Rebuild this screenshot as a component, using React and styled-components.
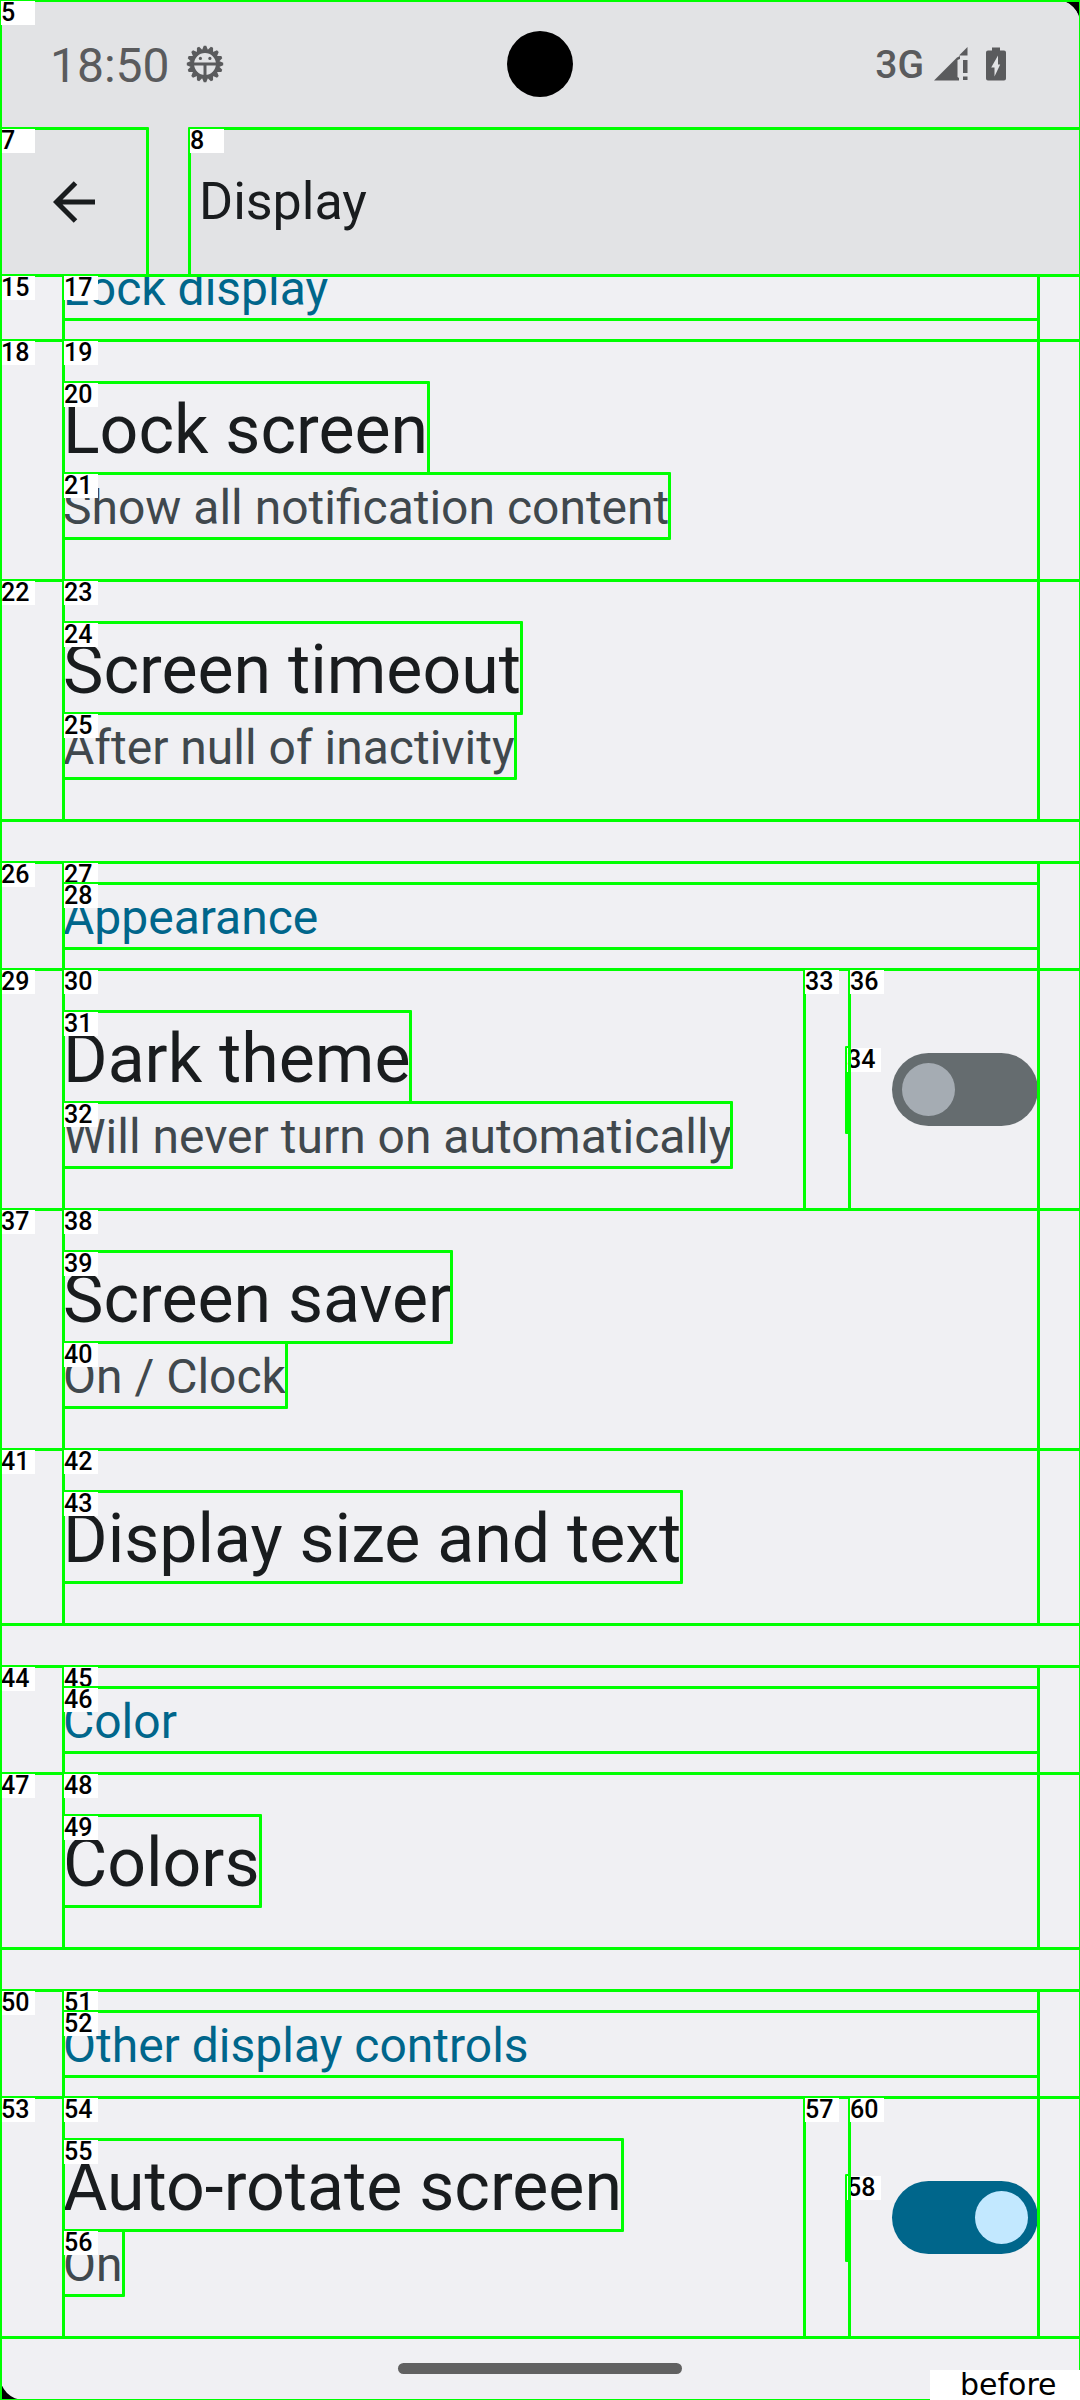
import React, { useState } from "react";
import styled, { createGlobalStyle } from "styled-components";

const GlobalStyle = createGlobalStyle`
  *, *::before, *::after { box-sizing: border-box; }
  body { margin: 0; background: #000; }
`;

const Screen = styled.div`
  position: relative;
  display: flex;
  flex-direction: column;
  min-height: 100vh;
  overflow: hidden;
  background: #000;
  color: #191c1e;
  font-family: Roboto, "Noto Sans", sans-serif;
`;

const Surface = styled.div`
  flex: 1;
  display: flex;
  flex-direction: column;
  border-radius: 24px;
  overflow: hidden;
  background: #f0f0f3;
`;

const Outline = styled.span`
  position: absolute;
  inset: -1px -2px -2px -1px;
  border: 3px solid #00ff00;
  border-radius: 1px;
  pointer-events: none;
`;

const Tag = styled.span`
  position: absolute;
  top: -1px;
  left: -1px;
  width: 34px;
  height: 24px;
  background: #fff;
  color: #000;
  font-size: 25px;
  font-weight: 500;
  line-height: 24px;
  text-align: left;
`;

function Mark({ id }) {
  return (
    <Outline aria-hidden="true">
      {id && <Tag>{id}</Tag>}
    </Outline>
  );
}

const StatusBar = styled.header`
  display: grid;
  grid-template-columns: 1fr auto 1fr;
  align-items: center;
  height: 128px;
  padding: 0 50px;
  background: #e2e3e5;
  color: #5a5b5d;
`;

const StatusStart = styled.div`
  display: flex;
  align-items: center;
  gap: 16px;
`;

const StatusEnd = styled.div`
  display: flex;
  align-items: center;
  justify-content: flex-end;
  gap: 18px;
  padding-right: 24px;
`;

const Cellular = styled.div`
  display: flex;
  align-items: center;
  gap: 10px;
`;

const Clock = styled.time`
  padding-top: 4px;
  font-size: 48px;
  line-height: 56px;
`;

const Network = styled.span`
  padding-top: 2px;
  font-size: 39px;
  font-weight: 500;
  line-height: 48px;
`;

const Camera = styled.div`
  width: 66px;
  height: 66px;
  border-radius: 50%;
  background: #000;
`;

const Toolbar = styled.div`
  display: flex;
  height: 147px;
  gap: 42px;
  background: #e2e3e5;
`;

const BackButton = styled.button`
  position: relative;
  display: grid;
  place-items: center;
  width: 147px;
  padding: 0;
  border: 0;
  background: none;
  color: #191c1e;
  font-family: inherit;
`;

const ToolbarTitle = styled.div`
  position: relative;
  flex: 1;
  display: flex;
  align-items: center;
  padding-left: 10px;
`;

const Heading = styled.h1`
  margin: 0;
  font-size: 52px;
  font-weight: 400;
  line-height: 64px;
`;

const List = styled.main`
  flex: 1;
  display: flex;
  flex-direction: column;
  gap: 42px;
`;

const Category = styled.section`
  display: flex;
  flex-direction: column;
`;

const CategoryHeader = styled.div`
  position: relative;
  padding: 0 42px 0 63px;
`;

const CategoryInner = styled.div`
  position: relative;
  padding: ${(p) => (p.$scrolled ? "0" : "21px")} 0 21px;
`;

const CategoryBox = styled.div`
  position: relative;
  display: flex;
  align-items: flex-end;
  height: ${(p) => (p.$scrolled ? "44px" : "65px")};
`;

const CategoryClip = styled.div`
  display: flex;
  align-items: flex-end;
  height: 100%;
  overflow: hidden;
`;

const CategoryTitle = styled.h2`
  margin: 0;
  padding-top: 4px;
  color: #00668b;
  font-size: 48px;
  font-weight: 400;
  line-height: 61px;
`;

const Row = styled.div`
  position: relative;
  display: flex;
  padding: 0 42px 0 63px;
`;

const RowText = styled.div`
  position: relative;
  flex: 1;
  display: flex;
  flex-direction: column;
  align-items: flex-start;
  padding: 42px 0;
`;

const Title = styled.div`
  position: relative;
  padding-top: 6px;
  font-size: 68px;
  line-height: 85px;
`;

const Summary = styled.div`
  position: relative;
  padding-top: 4px;
  color: #40484d;
  font-size: 48px;
  line-height: 61px;
`;

const DividerCell = styled.div`
  position: relative;
  display: flex;
  align-items: center;
  justify-content: flex-end;
  width: 45px;
`;

const Divider = styled.div`
  position: relative;
  width: 3px;
  height: 85px;
`;

const SwitchCell = styled.div`
  position: relative;
  display: flex;
  align-items: center;
  justify-content: flex-end;
  width: 189px;
`;

const Switch = styled.input`
  appearance: none;
  display: flex;
  align-items: center;
  width: 146px;
  height: 73px;
  margin: 0;
  padding: 10px;
  border-radius: 37px;
  background: #656c6f;

  &::before {
    content: "";
    width: 53px;
    height: 53px;
    border-radius: 50%;
    background: #a5acb3;
  }

  &:checked {
    justify-content: flex-end;
    background: #00668b;
  }

  &:checked::before {
    background: #c2e8ff;
  }
`;

const NavBar = styled.footer`
  display: flex;
  align-items: center;
  justify-content: center;
  height: 63px;
`;

const NavHandle = styled.div`
  width: 284px;
  height: 11px;
  border-radius: 6px;
  background: #616161;
`;

const Caption = styled.div`
  position: absolute;
  right: 0;
  bottom: 0;
  width: 150px;
  height: 30px;
  padding-left: 30px;
  background: #fff;
  color: #000;
  font-family: "DejaVu Sans", sans-serif;
  font-size: 30px;
  line-height: 30px;
`;

function DebugIcon() {
  const teeth = Array.from({ length: 16 }, (_, i) => i * 22.5);
  return (
    <svg width="38" height="38" viewBox="-19 -19 38 38" fill="currentColor">
      {teeth.map((a) => (
        <path key={a} d="M-3.4 -13L-1.2 -18.2H1.2L3.4 -13Z" transform={`rotate(${a})`} />
      ))}
      <circle r="12.6" fill="none" stroke="currentColor" strokeWidth="3.4" />
      <path d="M-12 -1.4H12V1.6H1.5V12H-1.5V1.6H-12Z" />
      <circle cx="-4.6" cy="-5.6" r="1.6" />
      <circle cx="4.9" cy="-5.6" r="1.6" />
    </svg>
  );
}

function SignalIcon() {
  return (
    <svg width="34" height="34" viewBox="0 0 34 34" fill="currentColor">
      <path d="M0 33.5L23 10.5L26 9V12L23.5 13V30L25 31V33.5Z" />
      <path d="M25 8.5L33.5 0V8.5Z" />
      <path d="M29 13h4.500v13H29zM29 29.500h4.500v3.500H29z" />
    </svg>
  );
}

function BatteryIcon() {
  return (
    <svg width="20" height="34" viewBox="0 0 20 34" fill="currentColor" fillRule="evenodd">
      <path d="M6 0.5h8v3h4a2 2 0 0 1 2 2V31.5a2 2 0 0 1-2 2H2a2 2 0 0 1-2-2V5.500a2 2 0 0 1 2-2h4zM12 8.500L5.200 20.500H8.500V29.500L14.200 17.500H12z" />
    </svg>
  );
}

function BackIcon() {
  return (
    <svg width="42" height="42" viewBox="0 0 42 42" fill="none" stroke="currentColor" strokeWidth="5">
      <path d="M42 21H4M22.500 2L3.500 21L22.500 40" />
    </svg>
  );
}

const categories = [
  {
    name: "Lock display",
    scrolled: true,
    marks: ["15", null, "17"],
    rows: [
      { title: "Lock screen", summary: "Show all notification content", marks: ["18", "19", "20", "21"] },
      { title: "Screen timeout", summary: "After null of inactivity", marks: ["22", "23", "24", "25"] },
    ],
  },
  {
    name: "Appearance",
    marks: ["26", "27", "28"],
    rows: [
      {
        title: "Dark theme",
        summary: "Will never turn on automatically",
        toggle: "off",
        marks: ["29", "30", "31", "32", "33", "34", "36"],
      },
      { title: "Screen saver", summary: "On / Clock", marks: ["37", "38", "39", "40"] },
      { title: "Display size and text", marks: ["41", "42", "43"] },
    ],
  },
  {
    name: "Color",
    marks: ["44", "45", "46"],
    rows: [{ title: "Colors", marks: ["47", "48", "49"] }],
  },
  {
    name: "Other display controls",
    marks: ["50", "51", "52"],
    rows: [
      {
        title: "Auto-rotate screen",
        summary: "On",
        toggle: "on",
        marks: ["53", "54", "55", "56", "57", "58", "60"],
      },
    ],
  },
];

function Preference({ title, summary, toggle, marks }) {
  const [on, setOn] = useState(toggle === "on");
  const id = title.toLowerCase().replace(/\s/g, "-");
  return (
    <Row>
      <Mark id={marks[0]} />
      <RowText>
        <Mark id={marks[1]} />
        <Title as={toggle ? "label" : "div"} htmlFor={toggle ? id : undefined}>
          {title}
          <Mark id={marks[2]} />
        </Title>
        {summary && (
          <Summary>
            {summary}
            <Mark id={marks[3]} />
          </Summary>
        )}
      </RowText>
      {toggle && (
        <>
          <DividerCell>
            <Mark id={marks[4]} />
            <Divider>
              <Mark id={marks[5]} />
            </Divider>
          </DividerCell>
          <SwitchCell>
            <Switch
              id={id}
              type="checkbox"
              role="switch"
              checked={on}
              onChange={(e) => setOn(e.target.checked)}
            />
            <Mark id={marks[6]} />
          </SwitchCell>
        </>
      )}
    </Row>
  );
}

export default function App() {
  return (
    <>
      <GlobalStyle />
      <Screen>
        <Surface>
          <StatusBar>
            <StatusStart>
              <Clock>18:50</Clock>
              <DebugIcon />
            </StatusStart>
            <Camera />
            <StatusEnd>
              <Cellular>
                <Network>3G</Network>
                <SignalIcon />
              </Cellular>
              <BatteryIcon />
            </StatusEnd>
          </StatusBar>
          <Toolbar>
            <BackButton type="button" aria-label="Back">
              <BackIcon />
              <Mark id="7" />
            </BackButton>
            <ToolbarTitle>
              <Heading>Display</Heading>
              <Mark id="8" />
            </ToolbarTitle>
          </Toolbar>
          <List>
            {categories.map((c) => (
              <Category key={c.name}>
                <CategoryHeader>
                  <Mark id={c.marks[0]} />
                  <CategoryInner $scrolled={c.scrolled}>
                    <Mark id={c.marks[1]} />
                    <CategoryBox $scrolled={c.scrolled}>
                      <CategoryClip>
                        <CategoryTitle>{c.name}</CategoryTitle>
                      </CategoryClip>
                      <Mark id={c.marks[2]} />
                    </CategoryBox>
                  </CategoryInner>
                </CategoryHeader>
                {c.rows.map((r) => (
                  <Preference key={r.title} {...r} />
                ))}
              </Category>
            ))}
          </List>
          <NavBar>
            <NavHandle />
          </NavBar>
        </Surface>
        <Mark id="5" />
        <Caption>before</Caption>
      </Screen>
    </>
  );
}
